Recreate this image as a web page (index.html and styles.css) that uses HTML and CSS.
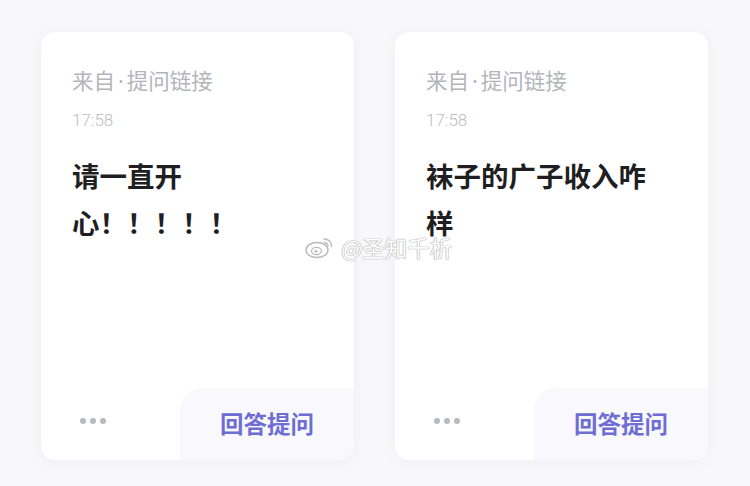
FILE: index.html
```html
<!DOCTYPE html>
<html lang="zh-CN">
<head>
    <meta charset="UTF-8">
    <meta name="viewport" content="width=device-width, initial-scale=1.0">
    <title>提问箱</title>
    <link rel="stylesheet" href="styles.css">
</head>
<body>
    <div class="board">
        <div class="card">
            <div class="card-body">
                <div class="source">来自<span class="dot">·</span>提问链接</div>
                <div class="time">17:58</div>
                <div class="question">请一直开心！！！！！</div>
            </div>
            <div class="card-foot">
                <div class="more"><span></span><span></span><span></span></div>
                <button class="answer">回答提问</button>
            </div>
        </div>

        <div class="card">
            <div class="card-body">
                <div class="source">来自<span class="dot">·</span>提问链接</div>
                <div class="time">17:58</div>
                <div class="question">袜子的广子收入咋样</div>
            </div>
            <div class="card-foot">
                <div class="more"><span></span><span></span><span></span></div>
                <button class="answer">回答提问</button>
            </div>
        </div>
    </div>

    <!-- watermark over the gap between cards -->
    <div class="watermark">
        <svg width="30" height="24" viewBox="0 0 30 24">
            <ellipse cx="12" cy="15" rx="11" ry="7.5" fill="#fff" stroke="#b9b9bd" stroke-width="1.4"/>
            <ellipse cx="11.5" cy="16" rx="5" ry="3.6" fill="none" stroke="#b9b9bd" stroke-width="1.3"/>
            <circle cx="11" cy="16.3" r="1.4" fill="#b9b9bd"/>
            <path d="M19 4 a7 7 0 0 1 7.5 7.5" fill="none" stroke="#b9b9bd" stroke-width="1.5" stroke-linecap="round"/>
            <path d="M19.5 7.5 a3.5 3.5 0 0 1 3.5 3.5" fill="none" stroke="#b9b9bd" stroke-width="1.4" stroke-linecap="round"/>
        </svg>
        <span>@圣知千析</span>
    </div>
</body>
</html>
```

FILE: styles.css
```css
body { margin: 0; background-color: #f8f8fa; font-family: "Noto Sans CJK SC", "Noto Sans", sans-serif; width: 750px; height: 486px; overflow: hidden; position: relative; }
.board { display: flex; gap: 41px; padding: 32px 0 0 41px; }
.card { width: 313px; height: 428px; background-color: #ffffff; border-radius: 14px; box-shadow: 0 2px 16px rgba(40, 40, 70, 0.045); display: flex; flex-direction: column; overflow: hidden; }
.card-body { flex: 1; padding: 33px 0 0 31px; }
.source { font-size: 21.5px; line-height: 30px; color: #b3b5bb; }
.source .dot { font-family: "Noto Sans", sans-serif; margin: 0 3px; }
.time { margin-top: 12px; font-family: Roboto, "Noto Sans", sans-serif; font-weight: 300; font-size: 17px; line-height: 24px; color: #bdbec2; }
.question { margin-top: 20px; width: 234px; font-size: 27.5px; line-height: 47px; font-weight: 700; color: #1f1f22; }
.card-foot { height: 72px; display: flex; align-items: stretch; }
.more { width: 139px; display: flex; gap: 4px; align-items: center; padding: 0 0 6px 39px; box-sizing: border-box; }
.more span { width: 6px; height: 6px; border-radius: 50%; background-color: #b8b9bf; }
.answer { flex: 1; border: none; border-top-left-radius: 22px; background-color: #f8f8fd; color: #6d6dd3; font-family: inherit; font-size: 23.5px; font-weight: 700; padding: 0 0 3px 0; cursor: pointer; }

.watermark { position: absolute; left: 305px; top: 231px; display: flex; align-items: center; gap: 6px; }
.watermark span { font-size: 22.5px; color: #ffffff; text-shadow: 0 0 1px #a9a9ad, 0 0 1px #a9a9ad, 0 0 1px #a9a9ad; }
```
